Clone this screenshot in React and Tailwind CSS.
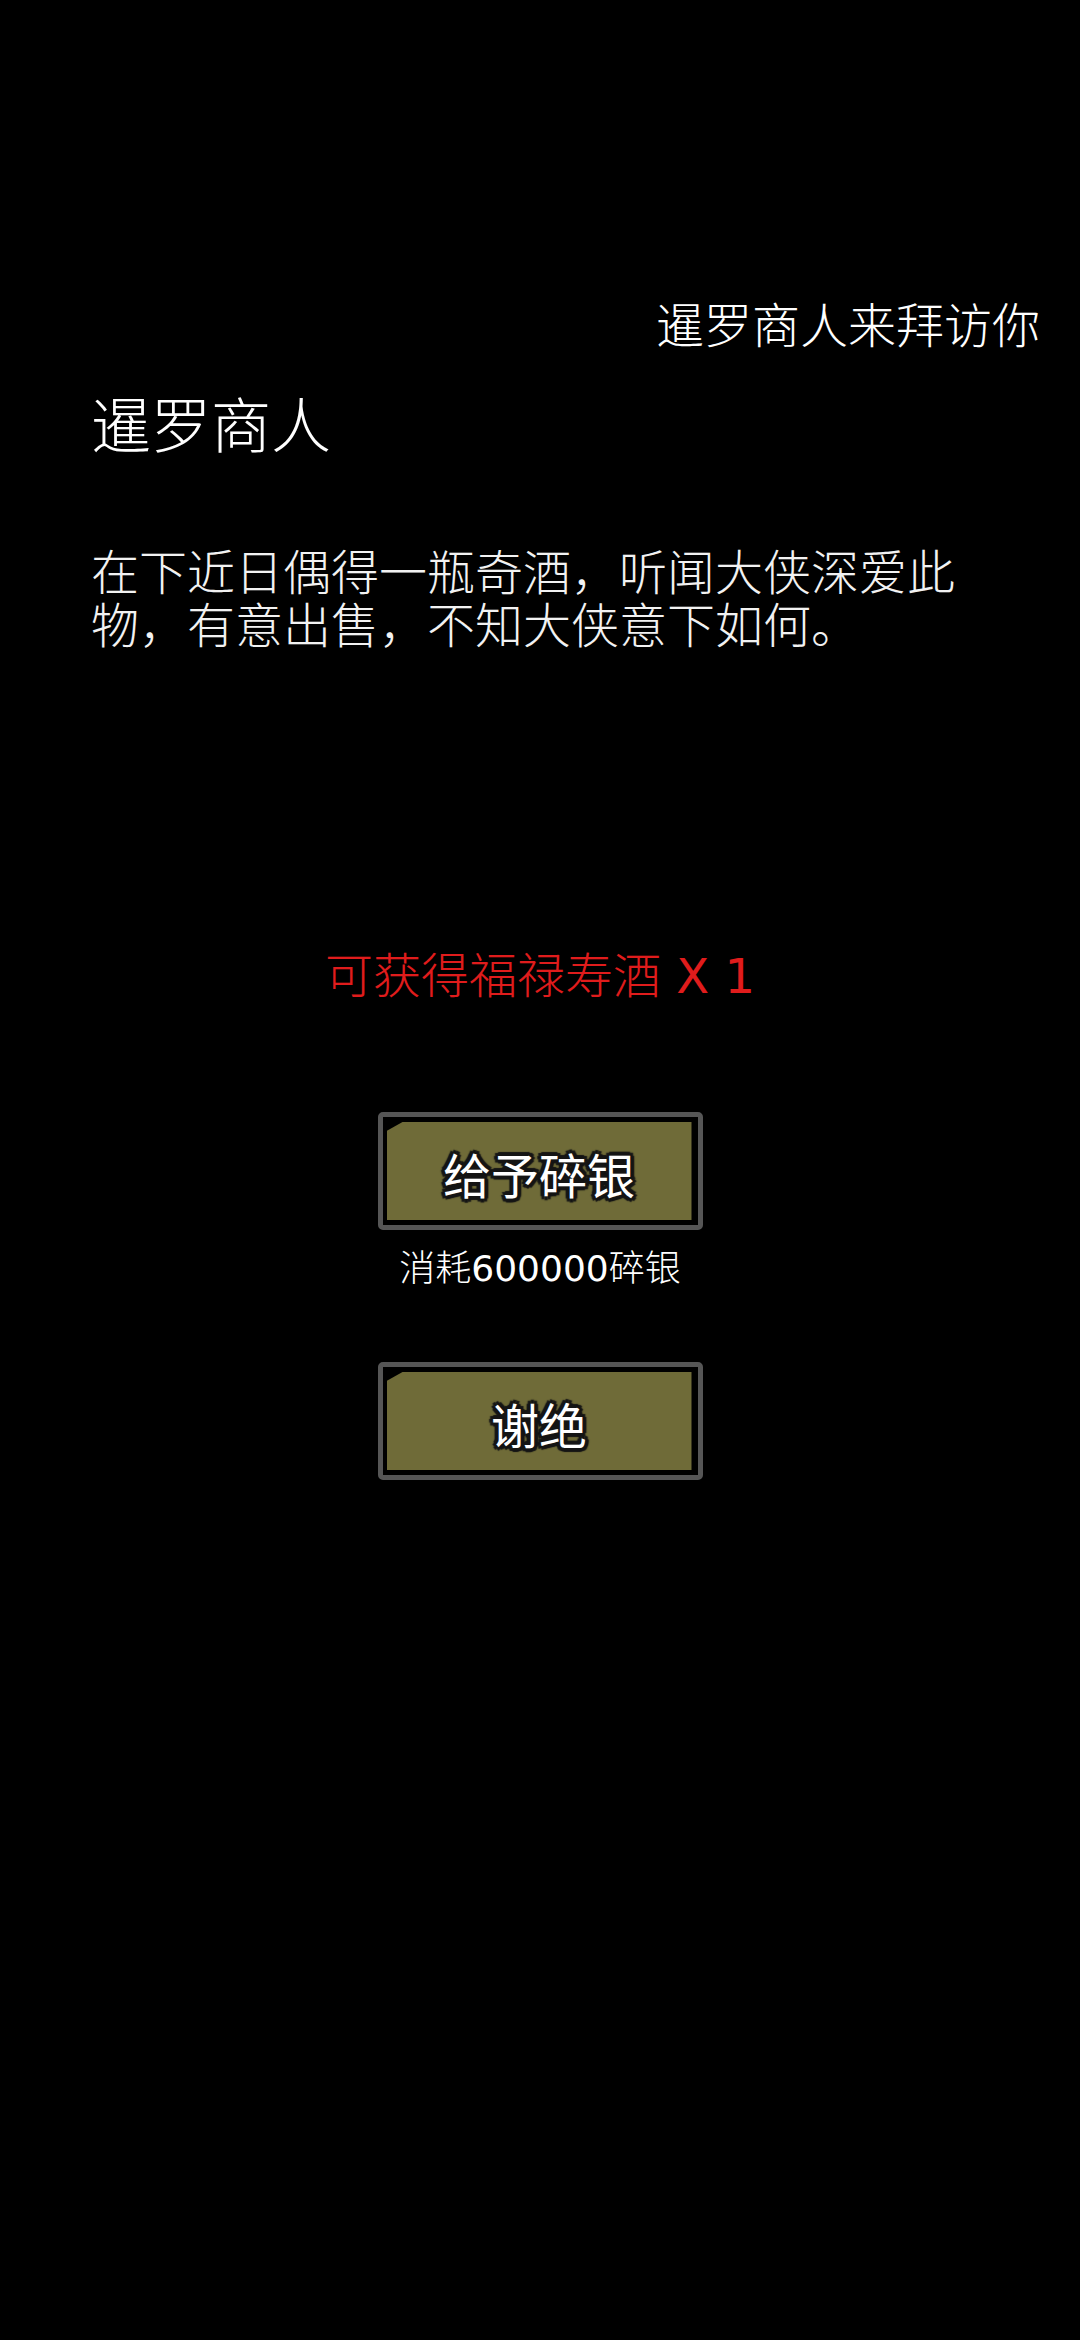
import React from 'react';

const font = { fontFamily: '"Noto Sans CJK SC", "Noto Sans", sans-serif' };
const latin = { fontFamily: '"DejaVu Sans", "Noto Sans CJK SC", sans-serif' };

const GameButton = ({ label }) => (
    <div className="w-[325px] h-[118px] rounded-[5px] border-[5px] border-[#565656] bg-black pl-[4px] pr-[6px] pt-[5px] pb-[5px]">
        <div className="w-full h-full bg-[#6f6b38] flex items-center justify-center [clip-path:polygon(16px_0,100%_0,100%_100%,0_100%,0_9px)]">
            <span className="mt-[4px] text-[48px] leading-[56px] font-normal text-white [text-shadow:-3px_-3px_1px_#151515,3px_-3px_1px_#151515,-3px_3px_1px_#151515,3px_3px_1px_#151515,0_4px_1px_#151515,0_-4px_1px_#151515,4px_0_1px_#151515,-4px_0_1px_#151515]">
                {label}
            </span>
        </div>
    </div>
);

const App = () => {
    return (
        <div className="w-[1080px] h-[2340px] bg-black text-white overflow-hidden font-light" style={font}>
            {/* Header */}
            <div className="pt-[294px] pr-[40px] text-right text-[48px] leading-[56px]">
                暹罗商人来拜访你
            </div>

            <div className="px-[91px]">
                <h1 className="mt-[37px] text-[60px] leading-[70px] font-light">暹罗商人</h1>
                <p className="mt-[86px] text-[48px] leading-[53px] text-[#f2f2f2]">
                    在下近日偶得一瓶奇酒，听闻大侠深爱此物，有意出售，不知大侠意下如何。
                </p>
            </div>

            {/* Reward + actions */}
            <div className="flex flex-col items-center">
                <div className="mt-[295px] text-[48px] leading-[56px] text-[#e01c1c]">
                    可获得福禄寿酒<span className="font-normal" style={latin}> X 1</span>
                </div>

                <div className="mt-[108px]">
                    <GameButton label="给予碎银" />
                </div>
                <div className="mt-[13px] text-[36px] leading-[44px]">
                    消耗<span className="font-normal" style={latin}>600000</span>碎银
                </div>

                <div className="mt-[71px]">
                    <GameButton label="谢绝" />
                </div>
            </div>
        </div>
    );
};

export default App;
